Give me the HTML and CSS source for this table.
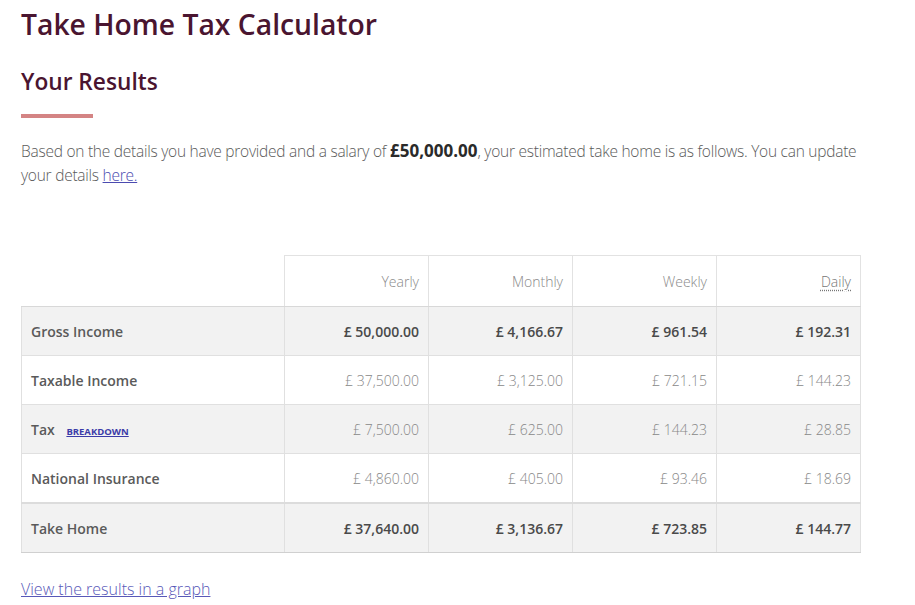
FILE: index.html
```html
<!DOCTYPE html>
<html lang="en">
<head>
<meta charset="utf-8">
<title>Take Home Tax Calculator</title>
<link rel="stylesheet" href="styles.css">
</head>
<body>
<main class="page">
  <h1 class="title">Take Home Tax Calculator</h1>
  <h2 class="subtitle">Your Results</h2>
  <div class="rule"></div>
  <p class="intro">Based on the details you have provided and a salary of <strong>£50,000.00</strong>, your estimated take home is as follows. You can update your details <a href="#">here.</a></p>

  <table class="results">
    <thead>
      <tr>
        <th class="blank"></th>
        <th>Yearly</th>
        <th>Monthly</th>
        <th>Weekly</th>
        <th><abbr title="Based on a 5 day week">Daily</abbr></th>
      </tr>
    </thead>
    <tbody>
      <tr class="shade strong">
        <td class="label">Gross Income</td>
        <td>£ 50,000.00</td><td>£ 4,166.67</td><td>£ 961.54</td><td>£ 192.31</td>
      </tr>
      <tr>
        <td class="label">Taxable Income</td>
        <td>£ 37,500.00</td><td>£ 3,125.00</td><td>£ 721.15</td><td>£ 144.23</td>
      </tr>
      <tr class="shade">
        <td class="label">Tax <a class="breakdown" href="#">BREAKDOWN</a></td>
        <td>£ 7,500.00</td><td>£ 625.00</td><td>£ 144.23</td><td>£ 28.85</td>
      </tr>
      <tr>
        <td class="label">National Insurance</td>
        <td>£ 4,860.00</td><td>£ 405.00</td><td>£ 93.46</td><td>£ 18.69</td>
      </tr>
      <tr class="shade strong total">
        <td class="label">Take Home</td>
        <td>£ 37,640.00</td><td>£ 3,136.67</td><td>£ 723.85</td><td>£ 144.77</td>
      </tr>
    </tbody>
  </table>

  <a class="graph-link" href="#">View the results in a graph</a>
</main>
</body>
</html>
```
FILE: styles.css
```css
html, body {
  margin: 0;
  padding: 0;
  background: #fff;
}
body {
  font-family: "Open Sans", "Liberation Sans", sans-serif;
  color: #555;
}
.page {
  padding: 0 21px;
  width: 839px;
}
.title {
  margin: 0;
  padding-top: 4px;
  font-size: 28.3px;
  line-height: 40px;
  font-weight: 600;
  color: #4a1530;
}
.subtitle {
  margin: 22px 0 0;
  font-size: 22.7px;
  line-height: 32px;
  font-weight: 600;
  color: #4a1530;
}
.rule {
  width: 72px;
  height: 4px;
  background: #d48484;
  margin-top: 16px;
}
.intro {
  margin: 21px 0 0;
  font-size: 15.5px;
  letter-spacing: -0.25px;
  line-height: 24px;
  font-weight: 300;
  color: #5a5a5a;
}
.intro strong {
  font-size: 17px;
  letter-spacing: 0;
  font-weight: 700;
  color: #2a2a2a;
}
.intro a {
  color: #4b4bb0;
  text-decoration: underline;
}
.results {
  margin-top: 68px;
  width: 840px;
  border-collapse: collapse;
  font-size: 14px;
}
.results th {
  height: 50px;
  padding: 0 9px 0 0;
  text-align: right;
  font-weight: 300;
  color: #8a8a8a;
  border: 1px solid #e2e2e2;
  border-bottom: 1px solid #d8d8d8;
  width: 134px;
}
.results th.blank {
  border: none;
  border-bottom: 1px solid #d8d8d8;
  width: auto;
}
.results abbr {
  text-decoration: underline dotted;
  text-underline-offset: 3px;
  color: #777;
}
.results td {
  height: 48px;
  padding: 0 9px 0 0;
  text-align: right;
  font-weight: 300;
  color: #888;
  border: 1px solid #e0e0e0;
  border-left: 1px solid #dadada;
}
.results td.label {
  text-align: left;
  padding: 0 0 0 9px;
  font-weight: 600;
  color: #5a5a5a;
  border-left: 1px solid #e0e0e0;
}
.results tr.shade td {
  background: #f2f2f2;
}
.results tr.strong td {
  font-weight: 600;
  color: #4a4a4a;
}
.results tr.strong td.label {
  color: #5a5a5a;
}
.results tr.total td {
  border-top: 2px solid #dcdcdc;
  border-bottom: 1px solid #d0d0d0;
}
.breakdown {
  margin-left: 8px;
  font-size: 9.5px;
  font-weight: 700;
  color: #3b3ba8;
  text-decoration: underline;
}
.graph-link {
  display: inline-block;
  margin-top: 25px;
  font-size: 16px;
  font-weight: 300;
  color: #5858b8;
  text-decoration: underline;
}
```
